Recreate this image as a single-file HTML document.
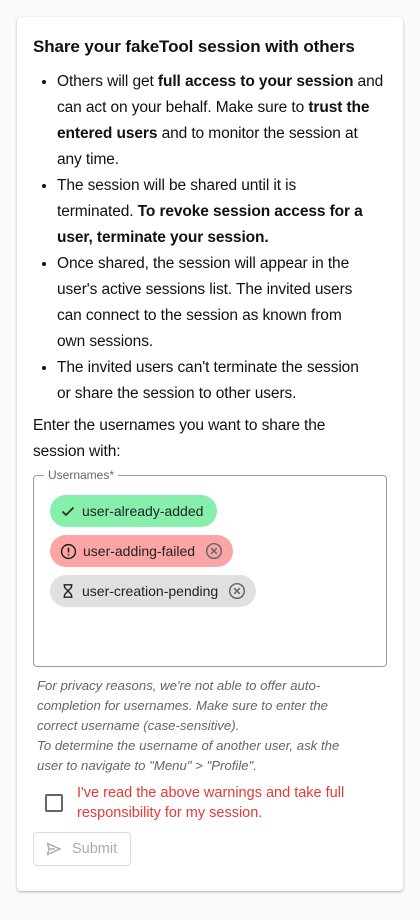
<!DOCTYPE html>
<html><head><meta charset="utf-8"><style>
body{margin:0;width:420px;height:920px;background:#fafafa;font-family:"Liberation Sans",sans-serif;color:#111;}
.card{position:absolute;left:17px;top:17px;width:386px;height:874px;background:#fff;border-radius:4px;box-shadow:0 1px 3px rgba(0,0,0,.2),0 1px 1px rgba(0,0,0,.12);}
h1{position:absolute;left:16px;top:20px;margin:0;font-size:17px;font-weight:bold;letter-spacing:-0.1px;}
ul{position:absolute;left:0;top:52px;margin:0;padding-left:40px;width:346px;font-size:15.5px;letter-spacing:-0.1px;line-height:26px;white-space:nowrap;}
li{margin:0;}
.p{position:absolute;left:16px;top:396px;width:330px;font-size:15.5px;line-height:26px;margin:0;letter-spacing:-0.1px;}
.fs{position:absolute;left:16px;top:458px;width:352px;height:190px;border:1px solid #999;border-radius:4px;}
.lg{position:absolute;left:10px;top:-8px;background:#fff;padding:0 4px;font-size:12px;color:#666;}
.chip{position:absolute;left:16px;height:32px;border-radius:16px;font-size:14px;line-height:32px;padding:0 10px 0 10px;display:flex;align-items:center;gap:6px;color:#222;}
.chip svg{flex:none}
.help{position:absolute;left:20px;top:659px;width:320px;font-size:13.2px;line-height:20px;color:#666;font-style:italic;}
.cb{position:absolute;left:28px;top:777px;width:14px;height:14px;border:2px solid #666;border-radius:2px;}
.lab{position:absolute;left:60px;top:766px;font-size:14.5px;line-height:20px;color:#e53935;width:300px;}
.btn{position:absolute;left:16px;top:815px;width:98px;height:34px;border:1px solid #ddd;border-radius:4px;color:#aaa;font-size:14.5px;display:flex;align-items:center;gap:10px;box-sizing:border-box;padding-left:12px;}
</style></head><body><div class="card">
<h1>Share your fakeTool session with others</h1>
<ul>
<li>Others will get <b>full access to your session</b> and<br>can act on your behalf. Make sure to <b>trust the<br>entered users</b> and to monitor the session at<br>any time.</li>
<li>The session will be shared until it is<br>terminated. <b>To revoke session access for a<br>user, terminate your session.</b></li>
<li>Once shared, the session will appear in the<br>user's active sessions list. The invited users<br>can connect to the session as known from<br>own sessions.</li>
<li>The invited users can't terminate the session<br>or share the session to other users.</li>
</ul>
<p class="p">Enter the usernames you want to share the session with:</p>
<div class="fs"><span class="lg">Usernames*</span>
<div class="chip" style="top:19px;background:#86efac"><svg width="16" height="16" viewBox="0 0 16 16"><path d="M2.5 8.5l3.5 3.5 7.5-7.5" fill="none" stroke="#222" stroke-width="1.6"/></svg>user-already-added&nbsp;</div>
<div class="chip" style="top:59px;background:#fca5a5"><svg width="17" height="17" viewBox="0 0 16 16"><circle cx="8" cy="8" r="6.5" fill="none" stroke="#222" stroke-width="1.4"/><path d="M8 4.3v4.6M8 10.5v1.3" stroke="#222" stroke-width="1.5"/></svg>user-adding-failed<svg width="18" height="18" viewBox="0 0 16 16" style="margin-left:4px"><circle cx="8" cy="8" r="6.5" fill="none" stroke="#666" stroke-width="1.3"/><path d="M5.5 5.5l5 5M10.5 5.5l-5 5" stroke="#666" stroke-width="1.3"/></svg></div>
<div class="chip" style="top:99px;background:#e0e0e0"><svg width="16" height="16" viewBox="0 0 16 16"><path d="M3.5 1.8h9M3.5 14.2h9M4.5 1.8v2.5L8 8l3.5-3.7V1.8M4.5 14.2v-2.5L8 8l3.5 3.7v2.5" fill="none" stroke="#222" stroke-width="1.4"/></svg>user-creation-pending<svg width="18" height="18" viewBox="0 0 16 16" style="margin-left:4px"><circle cx="8" cy="8" r="6.5" fill="none" stroke="#666" stroke-width="1.3"/><path d="M5.5 5.5l5 5M10.5 5.5l-5 5" stroke="#666" stroke-width="1.3"/></svg></div>
</div>
<div class="help" style="white-space:nowrap">For privacy reasons, we're not able to offer auto-<br>completion for usernames. Make sure to enter the<br>correct username (case-sensitive).<br>To determine the username of another user, ask the<br>user to navigate to "Menu" &gt; "Profile".</div>
<div class="cb"></div>
<div class="lab">I've read the above warnings and take full responsibility for my session.</div>
<div class="btn"><svg width="16" height="14" viewBox="0 0 16 14"><path d="M1.5 1.5L14 7 1.5 12.5 3 7z M3 7h6" fill="none" stroke="#aaa" stroke-width="1.4"/></svg>Submit</div>
</div></body></html>
